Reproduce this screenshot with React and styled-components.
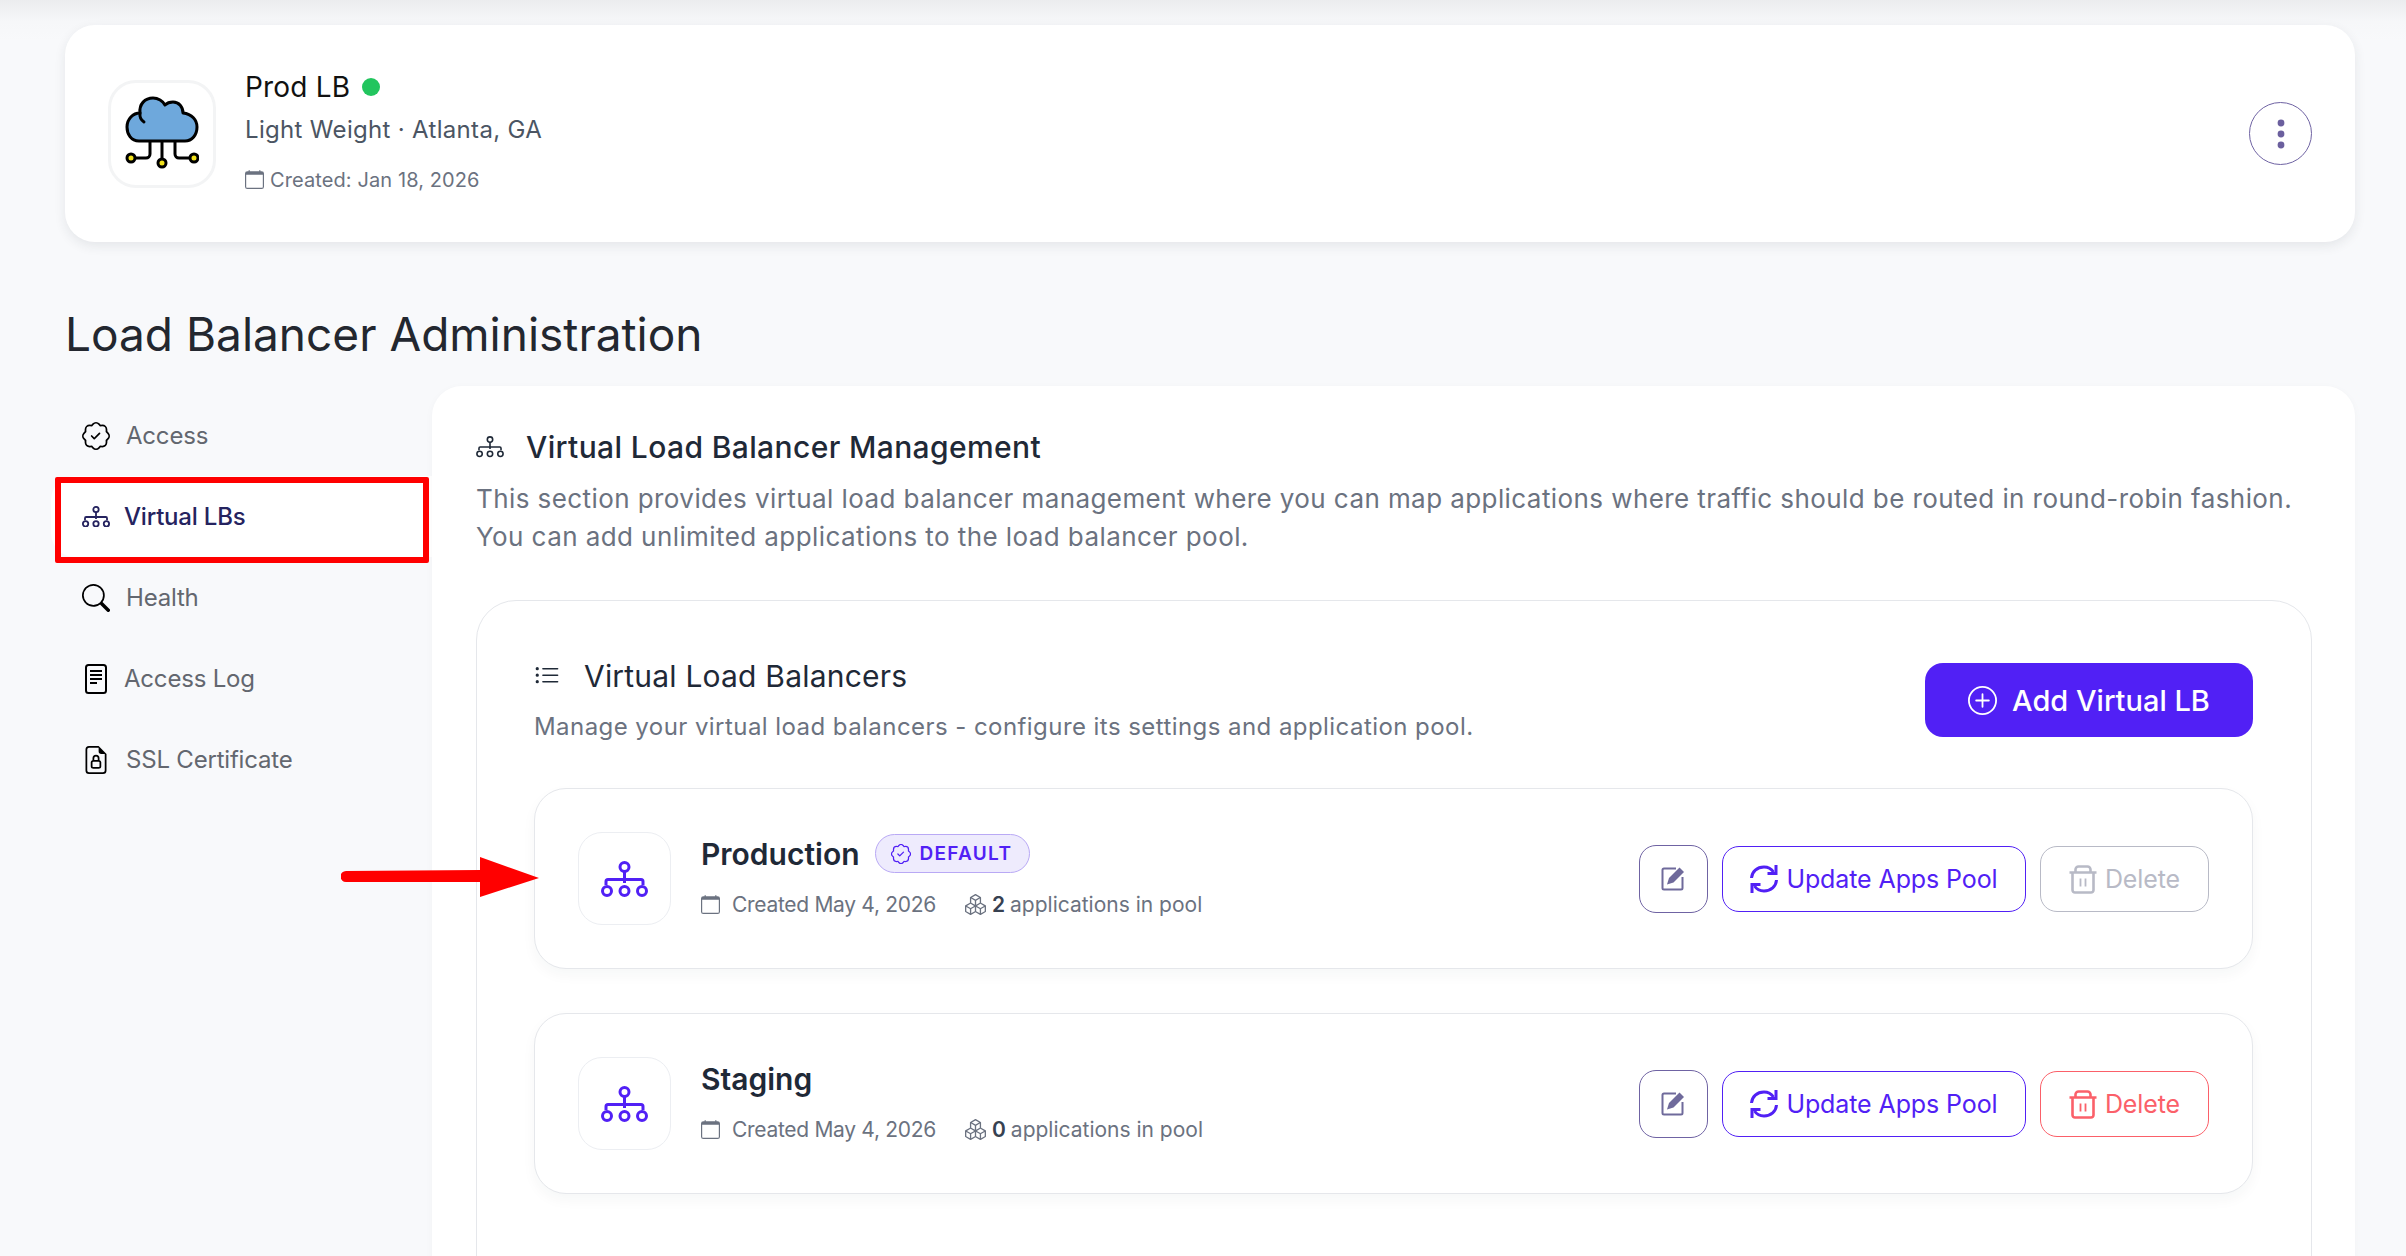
import styled, { createGlobalStyle } from 'styled-components';
import {
  BsBoxes,
  BsCalendar,
  BsFileEarmarkLock,
  BsListUl,
  BsPatchCheck,
  BsPlusCircle,
  BsSearch,
} from 'react-icons/bs';

const GlobalStyle = createGlobalStyle`
  html, body {
    margin: 0;
    padding: 0;
    background: #f8f9fb;
  }
  * {
    box-sizing: border-box;
  }
`;

const FONT = `Inter, 'Noto Sans', 'Liberation Sans', sans-serif`;
const PURPLE = '#5120f5';

const Page = styled.div`
  position: relative;
  width: 2406px;
  height: 1256px;
  overflow: hidden;
  padding: 25px 51px 0 65px;
  font-family: ${FONT};
  background: linear-gradient(#ebecee 0, #f6f7f9 22px, #f8f9fb 40px);
`;

const TopCard = styled.section`
  display: flex;
  align-items: center;
  height: 217px;
  padding: 0 43px;
  background: #fff;
  border-radius: 30px;
  box-shadow: 0 4px 12px rgba(30, 40, 60, 0.09);
`;

const LogoTile = styled.div`
  display: flex;
  align-items: center;
  justify-content: center;
  width: 108px;
  height: 108px;
  padding-bottom: 3px;
  border: 3px solid #f3f4f5;
  border-radius: 28px;
`;

const TopInfo = styled.div`
  flex: 1;
  margin-left: 29px;
  display: flex;
  flex-direction: column;
`;

const NameRow = styled.div`
  display: flex;
  align-items: center;
  gap: 12px;
  height: 36px;
  margin-top: -6px;
  font-size: 28px;
  color: #111;
  letter-spacing: 0.2px;
`;

const StatusDot = styled.span`
  width: 18px;
  height: 18px;
  border-radius: 50%;
  background: #22c55e;
`;

const SubLine = styled.div`
  margin-top: 8px;
  font-size: 24px;
  line-height: 34px;
  color: #4b5563;
  letter-spacing: 0.32px;
`;

const CreatedLine = styled.div`
  display: flex;
  align-items: center;
  gap: 6px;
  margin-top: 20px;
  font-size: 20px;
  line-height: 26px;
  color: #6b7280;
  letter-spacing: 0.1px;
`;

const MenuButton = styled.button`
  display: flex;
  align-items: center;
  justify-content: center;
  width: 63px;
  height: 63px;
  padding: 0;
  background: #fff;
  border: 1.5px solid #6f63a3;
  border-radius: 50%;
`;

const PageTitle = styled.h1`
  margin: 62px 0 0;
  font-size: 46px;
  line-height: 60px;
  font-weight: 400;
  color: #23272f;
`;

const Body = styled.div`
  display: flex;
  margin-top: 22px;
  margin-left: -14px;
`;

const Sidebar = styled.nav`
  width: 381px;
  flex: none;
  padding-top: 9px;
`;

const NavItem = styled.div`
  display: flex;
  align-items: center;
  height: 81px;
  padding-left: 31px;
  font-size: 24px;
  letter-spacing: -0.2px;
  font-weight: ${(p) => (p.$active ? 500 : 400)};
  color: ${(p) => (p.$active ? '#25235f' : '#63676f')};
  background: ${(p) => (p.$active ? '#fff' : 'transparent')};
  border-radius: ${(p) => (p.$active ? '24px 0 0 24px' : '0')};
`;

const NavIcon = styled.span`
  display: flex;
  align-items: center;
  justify-content: center;
  width: 28px;
  margin-right: ${(p) => p.$gap || 16}px;
  color: ${(p) => p.$color || '#000'};
`;

const MainPanel = styled.main`
  flex: 1;
  height: 900px;
  padding: 44px 43px 0 44px;
  background: #fff;
  border-radius: 30px 30px 0 0;
  box-shadow: 0 2px 8px rgba(30, 40, 60, 0.03);
`;

const SectionHead = styled.h2`
  display: flex;
  align-items: center;
  gap: 22px;
  margin: 0;
  height: 34px;
  font-size: 30px;
  font-weight: 500;
  letter-spacing: 0.38px;
  color: #1f2937;
`;

const Description = styled.p`
  margin: 16px 0 0;
  font-size: 26px;
  line-height: 38px;
  color: #6b7280;
  letter-spacing: 0.42px;
`;

const ListCard = styled.section`
  margin-top: 44px;
  height: 800px;
  padding: 60px 58px 0 57px;
  border: 1.5px solid #e5e7eb;
  border-radius: 40px;
`;

const ListHead = styled.div`
  display: flex;
  justify-content: space-between;
  align-items: flex-start;
`;

const ListTitle = styled.h3`
  display: flex;
  align-items: center;
  gap: 24px;
  margin: 0;
  height: 30px;
  font-size: 30px;
  font-weight: 400;
  letter-spacing: 0.2px;
  color: #1f2937;
`;

const ListSub = styled.p`
  margin: 20px 0 0;
  font-size: 24px;
  line-height: 32px;
  letter-spacing: 0.44px;
  color: #6b7280;
`;

const AddButton = styled.button`
  display: flex;
  align-items: center;
  justify-content: center;
  gap: 15px;
  width: 328px;
  height: 74px;
  margin-top: 2px;
  background: ${PURPLE};
  color: #fff;
  border: 0;
  border-radius: 18px;
  font-family: inherit;
  font-size: 29px;
  font-weight: 500;
`;

const Rows = styled.div`
  display: flex;
  flex-direction: column;
  gap: 44px;
  margin-top: 45px;
`;

const LbRow = styled.article`
  display: flex;
  align-items: center;
  height: 181px;
  padding: 0 43px;
  background: #fff;
  border: 1.5px solid #e5e7eb;
  border-radius: 32px;
  box-shadow: 0 6px 14px rgba(30, 40, 60, 0.04);
`;

const RowTile = styled.div`
  display: flex;
  align-items: center;
  justify-content: center;
  width: 93px;
  height: 93px;
  border: 1.5px solid #eceef2;
  border-radius: 24px;
`;

const RowInfo = styled.div`
  flex: 1;
  margin-left: 30px;
  margin-bottom: 5px;
`;

const RowName = styled.div`
  display: flex;
  align-items: center;
  gap: 15px;
  height: 40px;
  font-size: 30px;
  font-weight: 600;
  color: #1f2937;
`;

const Badge = styled.span`
  display: flex;
  align-items: center;
  gap: 9px;
  height: 39px;
  padding: 0 17px 0 15px;
  background: #eeebfd;
  border: 1.5px solid #b9a9f5;
  border-radius: 20px;
  font-size: 19px;
  font-weight: 600;
  letter-spacing: 1.3px;
  color: ${PURPLE};
`;

const RowMeta = styled.div`
  display: flex;
  align-items: center;
  margin-top: 17px;
  height: 28px;
  font-size: 21px;
  color: #6b7280;
`;

const MetaItem = styled.span`
  display: flex;
  align-items: center;
  gap: ${(p) => p.$gap}px;
  margin-right: 29px;
  letter-spacing: ${(p) => p.$spacing || 0}px;
`;

const Count = styled.b`
  font-weight: 600;
  color: #374151;
  margin-right: 5px;
`;

const Actions = styled.div`
  display: flex;
  align-items: center;
  gap: 14px;
`;

const ActionButton = styled.button`
  display: flex;
  align-items: center;
  justify-content: center;
  gap: 8px;
  height: 66px;
  width: ${(p) => p.$width}px;
  padding: 0;
  background: #fff;
  color: ${(p) => p.$color};
  border: 1.5px solid ${(p) => p.$color};
  border-radius: 17px;
  font-family: inherit;
  font-size: 25px;
  letter-spacing: -0.1px;
`;

const EditButton = styled(ActionButton)`
  width: 69px;
  height: 68px;
  color: #6f6a9b;
  border-color: #6f63a3;
`;

const Highlight = styled.div`
  position: absolute;
  left: 55px;
  top: 477px;
  width: 374px;
  height: 86px;
  border: 6px solid #ff0000;
  border-radius: 2px;
  pointer-events: none;
`;

const ArrowMark = styled.svg`
  position: absolute;
  left: 341px;
  top: 857px;
`;

function NetworkIcon({ size = 47, stroke = 3, color = PURPLE }) {
  return (
    <svg width={size} height={(size * 36) / 47} viewBox='0 0 47 36' fill='none' stroke={color} strokeWidth={(stroke * 47) / size}>
      <circle cx='23.5' cy='6' r='4.5' />
      <path d='M23.5 10.5V22M5 24v-3.5a2 2 0 0 1 2-2h33a2 2 0 0 1 2 2V24' />
      <circle cx='6' cy='30' r='4.5' />
      <circle cx='23.5' cy='30' r='4.5' />
      <circle cx='41' cy='30' r='4.5' />
    </svg>
  );
}

function CloudLogo() {
  return (
    <svg width='74' height='73' viewBox='0 0 74 73' fill='none'>
      <path
        d='M14 45C6 45 2 38 2 31C2 23 8 17 15 17C14 8 20 2 28 2C33 2 38 5 40 9C42 7 45 6 48 6C54 6 58 11 58 17C67 18 72 24 72 31C72 39 67 45 60 45Z'
        fill='#6ea8dc'
        stroke='#000'
        strokeWidth='3'
        strokeLinejoin='round'
      />
      <path d='M15 17C14.5 21 16 24 19 26' stroke='#000' strokeWidth='3' strokeLinecap='round' />
      <path
        d='M25 45v13a4 4 0 0 1-4 4H10M37 45v18M50 45v13a4 4 0 0 0 4 4h11'
        stroke='#000'
        strokeWidth='3'
      />
      <circle cx='6' cy='62' r='4' fill='#f2e21c' stroke='#000' strokeWidth='3' />
      <circle cx='37' cy='67' r='4' fill='#f2e21c' stroke='#000' strokeWidth='3' />
      <circle cx='69' cy='62' r='4' fill='#f2e21c' stroke='#000' strokeWidth='3' />
    </svg>
  );
}

function LogIcon() {
  return (
    <svg width='22' height='30' viewBox='0 0 22 30' fill='none' stroke='#000'>
      <rect x='1' y='1' width='20' height='28' rx='2.5' strokeWidth='2' />
      <path d='M5 7h12M5 11h12M5 15h12M5 19h7' strokeWidth='2' />
    </svg>
  );
}

function EditIcon() {
  return (
    <svg width='25' height='25' viewBox='0 0 25 25' fill='none'>
      <path d='M15 2.500H3a1.500 1.500 0 0 0-1.500 1.500v18a1.500 1.500 0 0 0 1.500 1.500h17a1.500 1.500 0 0 0 1.500-1.500V11' stroke='currentColor' strokeWidth='2' />
      <path d='M6 18.500l2-6.500L18.500 1.500l4.500 4.500L12.500 16.500 6 18.500Z' fill='currentColor' />
    </svg>
  );
}

function RefreshIcon() {
  return (
    <svg width='28' height='30' viewBox='0 0 28 30' fill='none' stroke='currentColor' strokeWidth='3'>
      <path d='M1.500 14C2 7.500 7 3 14 3c4 0 7.500 2 9.500 5' />
      <path d='M26.500 16c-.5 6.500-5.500 11-12.500 11-4 0-7.500-2-9.500-5' />
      <path d='M26 1v8.500h-8.500' />
      <path d='M2 29v-8.500h8.500' />
    </svg>
  );
}

function TrashIcon() {
  return (
    <svg width='28' height='30' viewBox='0 0 28 30' fill='none' stroke='currentColor' strokeWidth='2.6'>
      <path d='M0.500 8.500h27M6.500 8.500V5.500a3 3 0 0 1 3-3h9a3 3 0 0 1 3 3v3' />
      <path d='M3.500 8.500V26a2.500 2.500 0 0 0 2.500 2.500h16a2.500 2.500 0 0 0 2.500-2.500V8.500' />
      <path d='M11.500 14.500v8M16.500 14.500v8' strokeWidth='1.800' />
    </svg>
  );
}

function ThreeDots() {
  return (
    <svg width='8' height='30' viewBox='0 0 8 30' fill='#6b5f9e'>
      <circle cx='4' cy='4' r='3.400' />
      <circle cx='4' cy='15' r='3.400' />
      <circle cx='4' cy='26' r='3.400' />
    </svg>
  );
}

const LOAD_BALANCERS = [
  { name: 'Production', isDefault: true, apps: 2 },
  { name: 'Staging', isDefault: false, apps: 0 },
];

function LoadBalancerRow({ lb }) {
  return (
    <LbRow>
      <RowTile>
        <NetworkIcon />
      </RowTile>
      <RowInfo>
        <RowName>
          {lb.name}
          {lb.isDefault && (
            <Badge>
              <BsPatchCheck size={20} />
              DEFAULT
            </Badge>
          )}
        </RowName>
        <RowMeta>
          <MetaItem $gap={12} $spacing={-0.3}>
            <BsCalendar size={19} />
            Created May 4, 2026
          </MetaItem>
          <MetaItem $gap={6}>
            <BsBoxes size={21} />
            <span>
              <Count>{lb.apps}</Count>
              applications in pool
            </span>
          </MetaItem>
        </RowMeta>
      </RowInfo>
      <Actions>
        <EditButton $color='#6f63a3'>
          <EditIcon />
        </EditButton>
        <ActionButton $width={304} $color={PURPLE}>
          <RefreshIcon />
          Update Apps Pool
        </ActionButton>
        <ActionButton $width={169} $color={lb.isDefault ? '#b8bac6' : '#fb6069'}>
          <TrashIcon />
          Delete
        </ActionButton>
      </Actions>
    </LbRow>
  );
}

export default function App() {
  return (
    <Page>
      <GlobalStyle />
      <TopCard>
        <LogoTile>
          <CloudLogo />
        </LogoTile>
        <TopInfo>
          <NameRow>
            Prod LB
            <StatusDot />
          </NameRow>
          <SubLine>Light Weight · Atlanta, GA</SubLine>
          <CreatedLine>
            <BsCalendar size={19} />
            Created: Jan 18, 2026
          </CreatedLine>
        </TopInfo>
        <MenuButton>
          <ThreeDots />
        </MenuButton>
      </TopCard>

      <PageTitle>Load Balancer Administration</PageTitle>

      <Body>
        <Sidebar>
          <NavItem>
            <NavIcon>
              <BsPatchCheck size={28} />
            </NavIcon>
            Access
          </NavItem>
          <NavItem $active>
            <NavIcon $color='#25235f' $gap={14}>
              <NetworkIcon size={28} stroke={1.8} color='#25235f' />
            </NavIcon>
            Virtual LBs
          </NavItem>
          <NavItem>
            <NavIcon>
              <BsSearch size={28} />
            </NavIcon>
            Health
          </NavItem>
          <NavItem>
            <NavIcon $gap={14}>
              <LogIcon />
            </NavIcon>
            Access Log
          </NavItem>
          <NavItem>
            <NavIcon>
              <BsFileEarmarkLock size={30} />
            </NavIcon>
            SSL Certificate
          </NavItem>
        </Sidebar>

        <MainPanel>
          <SectionHead>
            <NetworkIcon size={28} stroke={1.6} color='#1f2937' />
            Virtual Load Balancer Management
          </SectionHead>
          <Description>
            This section provides virtual load balancer management where you can map applications where traffic should be routed in round-robin fashion.
            <br />
            You can add unlimited applications to the load balancer pool.
          </Description>

          <ListCard>
            <ListHead>
              <div>
                <ListTitle>
                  <BsListUl size={26} />
                  Virtual Load Balancers
                </ListTitle>
                <ListSub>Manage your virtual load balancers - configure its settings and application pool.</ListSub>
              </div>
              <AddButton>
                <BsPlusCircle size={29} />
                Add Virtual LB
              </AddButton>
            </ListHead>
            <Rows>
              {LOAD_BALANCERS.map((lb) => (
                <LoadBalancerRow key={lb.name} lb={lb} />
              ))}
            </Rows>
          </ListCard>
        </MainPanel>
      </Body>

      <Highlight />
      <ArrowMark width='198' height='40' viewBox='0 0 198 40'>
        <path d='M5 14l134 -1V0l59 21-59 19V25L5 25a5 5 0 0 1 0-11Z' fill='#ff0000' />
      </ArrowMark>
    </Page>
  );
}
